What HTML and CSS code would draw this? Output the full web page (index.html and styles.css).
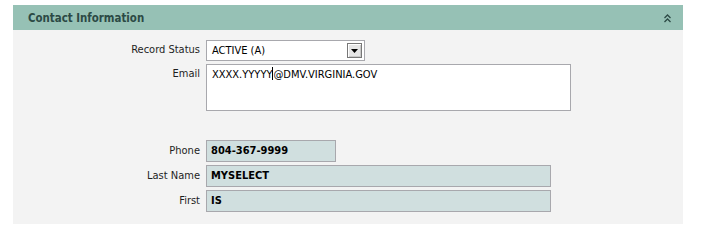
FILE: index.html
```html
<!DOCTYPE html>
<html>
<head>
<meta charset="utf-8">
<link rel="stylesheet" href="styles.css">
</head>
<body>
<div class="panel">
  <div class="panel-header">
    <span class="title">Contact Information</span>
    <svg class="collapse" width="7" height="9" viewBox="0 0 7 9">
      <path d="M0.5 4 L3.5 1 L6.5 4 M0.5 8 L3.5 5 L6.5 8" fill="none" stroke="#2c4a45" stroke-width="1.3"/>
    </svg>
  </div>
  <div class="panel-body">
    <div class="form">
      <label class="lbl lbl-select">Record Status</label>
      <div class="select">
        <span class="select-value">ACTIVE (A)</span>
        <span class="select-btn"><svg width="7" height="4" viewBox="0 0 7 4"><path d="M0 0 H7 L3.5 4 Z" fill="#000"/></svg></span>
      </div>
      <label class="lbl lbl-area">Email</label>
      <div class="textarea">XXXX.YYYYY<span class="caret"></span>@DMV.VIRGINIA.GOV</div>
      <div class="spacer"></div>
      <label class="lbl">Phone</label>
      <div class="ro ro-short">804-367-9999</div>
      <label class="lbl">Last Name</label>
      <div class="ro">MYSELECT</div>
      <label class="lbl">First</label>
      <div class="ro">IS</div>
    </div>
  </div>
</div>
</body>
</html>
```
FILE: styles.css
```css
html, body {
  margin: 0;
  padding: 0;
  background: #ffffff;
}
body {
  font-family: "DejaVu Sans Condensed", "DejaVu Sans", sans-serif;
  font-size: 11px;
  color: #000;
}
.panel {
  margin: 5px 0 0 13px;
  width: 670px;
}
.panel-header {
  height: 25px;
  background: #96c1b5;
  display: flex;
  align-items: center;
  justify-content: space-between;
  padding: 0 12px 0 15px;
}
.title {
  font-weight: bold;
  font-size: 11.4px;
  color: #2c4a45;
}
.collapse {
  display: block;
  margin-top: 1px;
}
.panel-body {
  background: #f3f3f3;
  padding: 10px 0 12px 0;
}
.form {
  display: grid;
  grid-template-columns: 187px 1fr;
  column-gap: 6px;
  row-gap: 3px;
  align-items: start;
}
.lbl {
  text-align: right;
  color: #1e1e1e;
  line-height: 22px;
}
.lbl-select {
  line-height: 20px;
}
.lbl-area {
  line-height: 20px;
}
.select {
  width: 159px;
  height: 21px;
  box-sizing: border-box;
  border: 1px solid #a8a8ad;
  background: #fff;
  display: flex;
  align-items: center;
  justify-content: space-between;
  padding: 0 2px 0 5px;
}
.select-value {
  line-height: 19px;
}
.select-btn {
  width: 15px;
  height: 15px;
  box-sizing: border-box;
  border: 1px solid #777;
  box-shadow: inset 1px 1px 0 #fff, inset -1px -1px 0 #c8c8c8;
  background: #e6e6e6;
  display: flex;
  align-items: center;
  justify-content: center;
}
.select-btn svg {
  display: block;
}
.textarea {
  width: 365px;
  height: 47px;
  box-sizing: border-box;
  border: 1px solid #a8a8ad;
  background: #fff;
  padding: 2px 5px;
  line-height: 14px;
}
.caret {
  display: inline-block;
  width: 1px;
  height: 13px;
  background: #000;
  vertical-align: -2px;
}
.spacer {
  grid-column: 1 / span 2;
  height: 23px;
}
.ro {
  width: 345px;
  height: 22px;
  box-sizing: border-box;
  border: 1px solid #a8a8ad;
  background: #d0dfdf;
  font-weight: bold;
  padding: 0 4px;
  line-height: 20px;
}
.ro-short {
  width: 130px;
}
```
